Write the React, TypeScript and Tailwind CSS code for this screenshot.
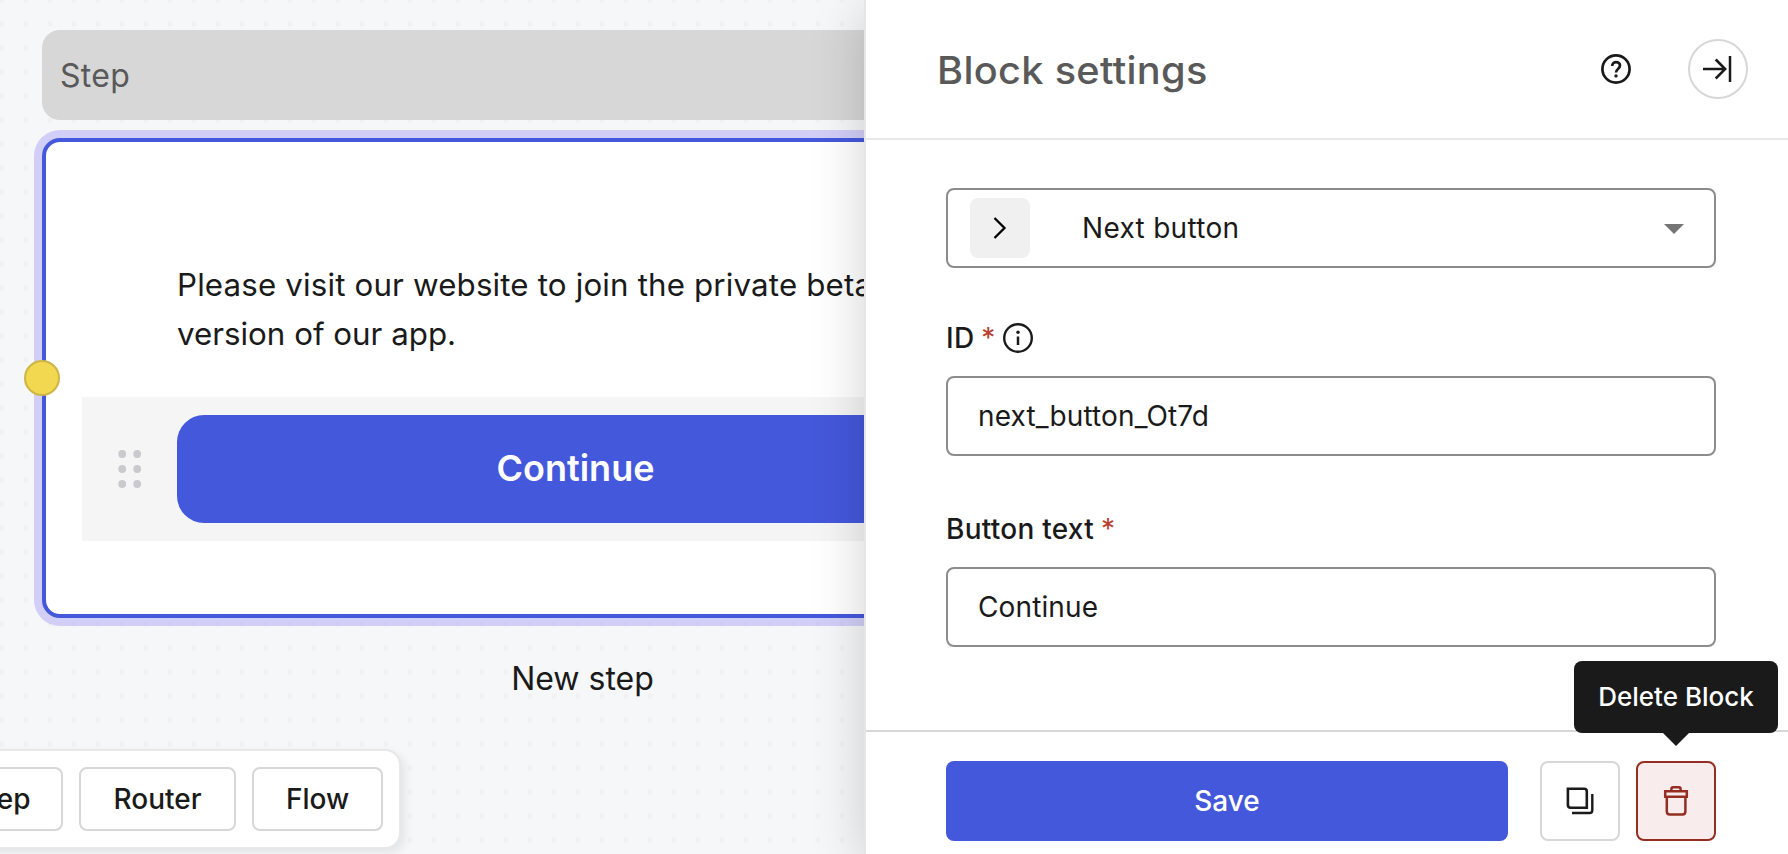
import React from "react";

const ink = "#1a1a1a";

function Handle() {
  return (
    <svg width="24" height="40" viewBox="0 0 24 40" fill="#c9c9ce" className="shrink-0">
      {[5, 20, 35].map((y) => (
        <React.Fragment key={y}>
          <circle cx="4.200" cy={y} r="3.9" />
          <circle cx="19.200" cy={y} r="3.9" />
        </React.Fragment>
      ))}
    </svg>
  );
}

function ToolButton({ label, width }: { label: string; width: string }) {
  return (
    <button className={`${width} h-16 shrink-0 rounded-lg border-2 border-[#d7d7d7] bg-white text-[28px] font-medium`}>
      {label}
    </button>
  );
}

function Canvas() {
  return (
    <main className="relative flex h-full w-[864px] shrink-0 flex-col overflow-hidden bg-[#f6f7f9]">
      <svg className="absolute inset-0 h-full w-full">
        <defs>
          <pattern id="grid" width="24" height="24" patternUnits="userSpaceOnUse">
            <rect x="0" y="21.7" width="4.400" height="2.300" fill="#f1f1f1" />
            <rect x="0" y="0" width="4.400" height="2.300" fill="#f1f1f1" />
          </pattern>
        </defs>
        <rect width="100%" height="100%" fill="url(#grid)" />
      </svg>
      <section className="relative ml-[42px] mt-[30px] w-[1080px] shrink-0">
        <header className="flex h-[90px] items-center rounded-[18px] bg-[#d7d7d7] px-[18px] pt-[2px] text-[32px] tracking-[0.3px] text-[#595959]">
          Step
        </header>
        <div className="relative mt-[18px] h-[480px] rounded-[18px] border-4 border-[#4458db] bg-white pl-9 pt-[119px] ring-8 ring-[#aca8f7]/50">
          <p className="ml-[95px] w-[780px] text-[31.3px] leading-[49px] tracking-[0.15px] text-[#1a1a1a]">
            Please visit our website to join the private beta
            <br />
            <span className="tracking-[0px]">version of our app.</span>
          </p>
          <div className="mt-[38px] flex h-36 w-[1000px] items-center bg-[#f5f5f5] pl-9">
            <Handle />
            <button className="ml-[35px] h-[108px] w-[797px] rounded-[27px] bg-[#4458db] pb-[2px] text-[36px] font-semibold text-white">
              Continue
            </button>
          </div>
          <span className="absolute -left-[22px] top-[218px] size-9 rounded-full border-2 border-[#cdb645] bg-[#f1d850]" />
        </div>
        <p className="mt-[37px] pl-px text-center text-[32px] leading-[48px] text-[#1a1a1a]">New step</p>
      </section>
      <div className="relative -ml-16 mb-[5px] mt-auto flex h-[100px] w-[465px] shrink-0 items-center justify-end gap-4 rounded-2xl border-2 border-[#e8e8e8] bg-white pr-4 shadow-[4px_4px_10px_rgba(0,0,0,0.08)]">
        <ToolButton label="Step" width="w-[126px]" />
        <ToolButton label="Router" width="w-[157px]" />
        <ToolButton label="Flow" width="w-[131px]" />
      </div>
    </main>
  );
}

function Field({ label, value, info }: { label: string; value: string; info?: boolean }) {
  return (
    <div>
      <div className="flex h-9 items-center text-[28px] font-medium tracking-[0.25px]">
        <span>{label}</span>
        <span className="ml-[7px] font-normal text-[#b83f30]">*</span>
        {info && (
          <svg width="32" height="32" viewBox="0 0 32 32" fill="none" stroke={ink} className="ml-[6px]">
            <circle cx="16" cy="16" r="13.8" strokeWidth="2.400" />
            <path d="M16 14.500v8.500" strokeWidth="2.500" />
            <circle cx="16" cy="10.200" r="1.700" fill={ink} stroke="none" />
          </svg>
        )}
      </div>
      <div className="mt-5 flex h-20 items-center rounded-lg border-2 border-[#8c8c8c] px-[30px] text-[28px] tracking-[0.12px]">
        {value}
      </div>
    </div>
  );
}

function Panel() {
  return (
    <aside className="relative flex h-full flex-1 flex-col border-l-2 border-[#e5e5e5] bg-white shadow-[0_10px_50px_rgba(0,0,0,0.18)]">
      <header className="flex h-[140px] shrink-0 items-center border-b-2 border-[#e8e8e8] pl-[71px] pr-10">
        <h1 className="flex-1 origin-left scale-x-[1.045] pt-[2px] text-[38px] font-medium tracking-[0.3px] text-[#595959]">
          Block settings
        </h1>
        <svg width="36" height="36" viewBox="0 0 36 36" fill="none" stroke={ink} strokeWidth="2.700">
          <circle cx="18" cy="18" r="13.600" />
          <path d="M14.200 14.900c0-2.300 1.700-3.800 3.900-3.800s3.900 1.400 3.900 3.500c0 3-4 3.600-4 6.800" />
          <circle cx="18" cy="24.900" r="1.700" fill={ink} stroke="none" />
        </svg>
        <button className="ml-[54px] flex size-[60px] items-center justify-center rounded-full border-2 border-[#d7d7d7]">
          <svg width="36" height="36" viewBox="0 0 36 36" fill="none" stroke={ink} strokeWidth="2.500">
            <path d="M3 18h22M15.700 8.500l9.500 9.500-9.500 9.500M30 5v26" />
          </svg>
        </button>
      </header>
      <div className="flex-1 pl-20 pr-[72px] pt-12 text-[#1a1a1a]">
        <div className="flex h-20 items-center rounded-lg border-2 border-[#8c8c8c] pl-[22px] pr-[30px] text-[28px]">
          <span className="flex size-[60px] items-center justify-center rounded-lg bg-[#f0f0f0]">
            <svg width="24" height="24" viewBox="0 0 24 24" fill="none" stroke="#000" strokeWidth="2.300">
              <path d="M6.500 2l10 10-10 10" />
            </svg>
          </span>
          <span className="ml-[52px] flex-1 tracking-[0.3px]">Next button</span>
          <svg width="20" height="10" viewBox="0 0 20 10" fill="#757575" className="mt-[2px]">
            <path d="M0 0h20L10 10z" />
          </svg>
        </div>
        <div className="mt-[52px] flex flex-col gap-[55px]">
          <Field label="ID" value="next_button_Ot7d" info />
          <Field label="Button text" value="Continue" />
        </div>
      </div>
      <footer className="flex h-[124px] shrink-0 border-t-2 border-[#d7d7d7] pl-20 pr-[72px] pt-[29px]">
        <button className="h-20 flex-1 rounded-lg bg-[#4458db] text-[28px] font-medium text-white">Save</button>
        <button className="ml-8 flex size-20 items-center justify-center rounded-lg border-2 border-[#d7d7d7]">
          <svg width="32" height="32" viewBox="0 0 32 32" fill="none" stroke={ink} strokeWidth="2.600">
            <path d="M3.900 3.700h16.200q2.700 0 2.700 2.700V22.700H6.600Q3.900 22.700 3.900 20z" />
            <path d="M28.300 9v16.300q0 2.700-2.700 2.700H8" strokeWidth="2.400" />
          </svg>
        </button>
        <div className="relative ml-4 size-20">
          <button className="flex size-20 items-center justify-center rounded-lg border-2 border-[#942d22] bg-[#f9ecec]">
            <svg width="32" height="32" viewBox="0 0 32 32" fill="none" stroke="#942d22" strokeWidth="2.500">
              <path d="M5.200 6.300h21.600v5.400H5.200zM11.400 6.300V4q0-1.700 1.700-1.700h5.800q1.700 0 1.700 1.700v2.300M6.800 11.700v14.700q0 3 3 3h12.600q3 0 3-3V11.700" />
            </svg>
          </button>
          <div className="absolute -left-[62px] -top-[100px] flex h-[72px] w-[204px] items-center justify-center rounded-lg bg-[#1a1a1a] pb-[2px] text-[26px] font-medium text-white">
            Delete Block
            <svg width="26" height="13" viewBox="0 0 26 13" fill={ink} className="absolute left-[89px] top-full">
              <path d="M0 0h26L13 13z" />
            </svg>
          </div>
        </div>
      </footer>
    </aside>
  );
}

export default function App() {
  return (
    <div className="flex h-[854px] w-[1788px] overflow-hidden font-['Inter',sans-serif] text-[#1a1a1a]">
      <Canvas />
      <Panel />
    </div>
  );
}
